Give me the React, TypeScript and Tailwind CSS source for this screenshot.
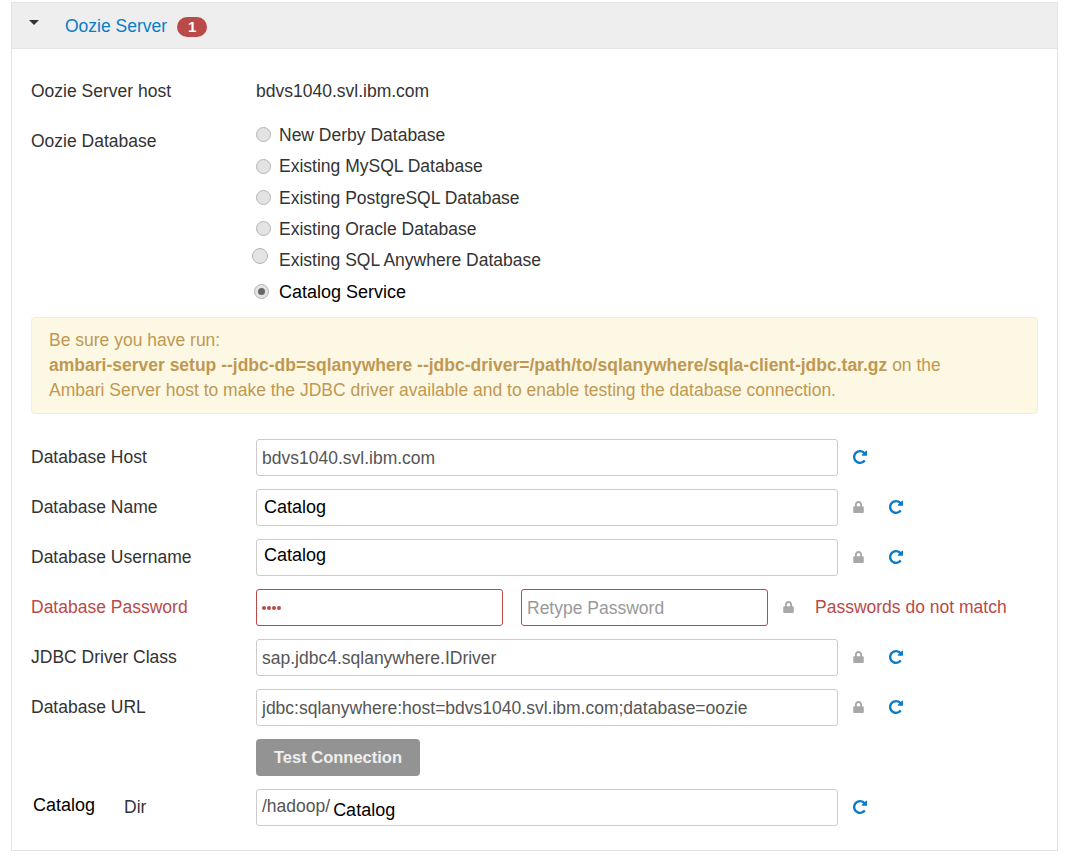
import React from 'react';
import { FaLock } from 'react-icons/fa';

function Radio({ checked, className }: { checked?: boolean; className?: string }) {
  return (
    <span className={`flex h-[15px] w-[15px] shrink-0 items-center justify-center rounded-full border border-[#b5b5b5] bg-[#e3e3e3] ${className ?? ''}`}>
      {checked && <span className="h-[7px] w-[7px] rounded-full bg-[#666]" />}
    </span>
  );
}

function Refresh() {
  return (
    <svg viewBox="0 0 1536 1536" className="h-[14px] w-[14px] text-[#0a7cc7]" fill="currentColor">
      <path d="M1536 128v448q0 26-19 45t-45 19h-448q-42 0-59-40-17-39 14-69l138-138q-148-137-349-137-104 0-198.5 40.5t-163.5 109.5-109.5 163.5-40.5 198.5 40.5 198.5 109.5 163.5 163.5 109.5 198.5 40.5q119 0 225-52t179-147q7-10 23-12 15 0 25 9l137 138q9 8 9.5 20.5t-7.5 22.5q-109 132-264 204.5t-327 72.5q-156 0-298-61t-245-164-164-245-61-298 61-298 164-245 245-164 298-61q147 0 284.5 55.5t244.5 156.5l130-129q29-31 70-14 39 17 39 59z" />
    </svg>
  );
}

function Lock() {
  return <FaLock className="h-[12px] w-[11px] text-[#a8a8a8]" />;
}

function Field({
  label,
  value,
  valueClass,
  locked,
}: {
  label: string;
  value: string;
  valueClass?: string;
  locked?: boolean;
}) {
  return (
    <div className="flex h-[37px] items-center">
      <label className="w-[225px] pb-[2px] text-[#333]">{label}</label>
      <div className={`flex h-[37px] w-[582px] items-center rounded-[3px] border border-[#ccc] bg-white px-[5px] ${valueClass ?? 'text-[#555]'}`}>
        {value}
      </div>
      {locked ? (
        <>
          <span className="ml-[15px] flex w-[11px] justify-center pb-[2px]"><Lock /></span>
          <span className="ml-[25px] flex pb-[2px]"><Refresh /></span>
        </>
      ) : (
        <span className="ml-[15px] flex pb-[2px]"><Refresh /></span>
      )}
    </div>
  );
}

const radios = [
  { text: 'New Derby Database', h: 'h-[31px]' },
  { text: 'Existing MySQL Database', h: 'h-[32px]' },
  { text: 'Existing PostgreSQL Database', h: 'h-[31px]' },
  { text: 'Existing Oracle Database', h: 'h-[31px]' },
];

export default function App() {
  return (
    <div className="h-[862px] w-[1079px] bg-white pl-[11px] pt-[2px] font-['Liberation_Sans',Arial,sans-serif] text-[17.5px] leading-[20px] text-[#333]">
      <section className="h-[849px] w-[1047px] border border-[#e3e3e3]">
        <header className="flex h-[46px] items-center border-b border-[#e3e3e3] bg-[#eeeeee]">
          <span className="mb-[6px] ml-[17px] h-0 w-0 border-x-[5px] border-t-[5px] border-x-transparent border-t-[#333]" />
          <a className="ml-[26px] text-[#0a7cc7]">Oozie Server</a>
          <span className="ml-[10px] mt-[2px] flex h-[20px] w-[30px] items-center justify-center rounded-full bg-[#b94a48] text-[15px] font-bold text-white">1</span>
        </header>

        <div className="flex flex-col pl-[19px] pt-[32px]">
          <div className="flex h-[20px] items-center">
            <span className="w-[225px]">Oozie Server host</span>
            <span>bdvs1040.svl.ibm.com</span>
          </div>

          <div className="mt-[18px] flex">
            <span className="mt-[12px] w-[225px]">Oozie Database</span>
            <div className="flex flex-col">
              {radios.map((r) => (
                <div key={r.text} className={`flex items-center ${r.h}`}>
                  <Radio />
                  <span className="ml-[8px]">{r.text}</span>
                </div>
              ))}
              <div className="flex h-[31px] items-center">
                <Radio className="-ml-[4px] mb-[8px] h-[16px] w-[16px]" />
                <span className="ml-[11px]">Existing SQL Anywhere Database</span>
              </div>
              <div className="flex h-[33px] items-center text-[18px] text-black">
                <Radio checked className="-ml-[2px]" />
                <span className="ml-[10px]">Catalog Service</span>
              </div>
            </div>
          </div>

          <div className="mt-[9px] h-[97px] w-[1007px] rounded-[4px] border border-[#faebcc] bg-[#fcf8e3] px-[17px] pt-[10px] leading-[25px] text-[#c09853]">
            Be sure you have run:
            <br />
            <b>ambari-server setup --jdbc-db=sqlanywhere --jdbc-driver=/path/to/sqlanywhere/sqla-client-jdbc.tar.gz</b> on the
            <br />
            Ambari Server host to make the JDBC driver available and to enable testing the database connection.
          </div>

          <div className="mt-[25px] flex flex-col gap-[13px]">
            <Field label="Database Host" value="bdvs1040.svl.ibm.com" />
            <Field label="Database Name" value="Catalog" valueClass="pb-[2px] pl-[7px] text-[18px] text-black" locked />
            <Field label="Database Username" value="Catalog" valueClass="pb-[5px] pl-[7px] text-[18px] text-black" locked />

            <div className="flex h-[37px] items-center text-[#b94a48]">
              <label className="w-[225px] pb-[2px]">Database Password</label>
              <div className="flex h-[37px] w-[247px] items-center gap-[1px] rounded-[3px] border border-[#b94a48] px-[5px]">
                <span className="h-[4px] w-[4px] rounded-full bg-[#b94a48]" />
                <span className="h-[4px] w-[4px] rounded-full bg-[#b94a48]" />
                <span className="h-[4px] w-[4px] rounded-full bg-[#b94a48]" />
                <span className="h-[4px] w-[4px] rounded-full bg-[#b94a48]" />
              </div>
              <div className="ml-[18px] flex h-[37px] w-[247px] items-center rounded-[3px] border border-[#b94a48] px-[5px] text-[#999]">
                Retype Password
              </div>
              <span className="ml-[15px] flex pb-[2px]"><Lock /></span>
              <span className="ml-[21px] pb-[2px]">Passwords do not match</span>
            </div>

            <Field label="JDBC Driver Class" value="sap.jdbc4.sqlanywhere.IDriver" locked />
            <Field label="Database URL" value="jdbc:sqlanywhere:host=bdvs1040.svl.ibm.com;database=oozie" locked />

            <div className="flex h-[37px]">
              <button className="ml-[225px] h-[37px] w-[164px] rounded-[4px] bg-[#939393] pb-[2px] text-[16.5px] font-bold text-white/85">
                Test Connection
              </button>
            </div>

            <div className="flex h-[37px] items-center">
              <label className="flex w-[225px] items-center pb-[2px]">
                <span className="mb-[4px] ml-[2px] w-[91px] text-[18px] text-black">Catalog</span>
                <span>Dir</span>
              </label>
              <div className="flex h-[37px] w-[582px] items-center rounded-[3px] border border-[#ccc] px-[5px] text-[#555]">
                <span className="mb-[4px]">/hadoop/</span>
                <span className="ml-[3px] mt-[4px] text-[18px] text-black">Catalog</span>
              </div>
              <span className="ml-[15px] flex pb-[2px]"><Refresh /></span>
            </div>
          </div>
        </div>
      </section>
    </div>
  );
}
